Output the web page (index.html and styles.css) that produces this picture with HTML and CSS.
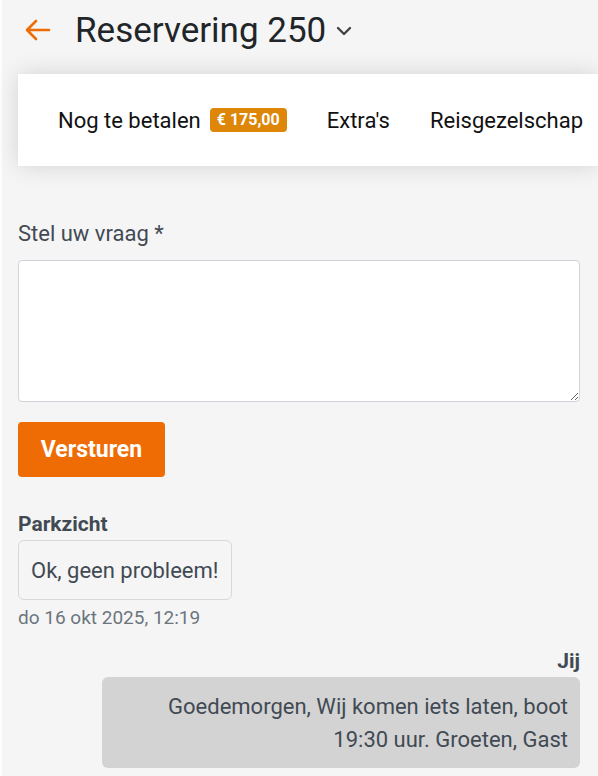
FILE: index.html
```html
<!DOCTYPE html>
<html lang="nl">
<head>
<meta charset="utf-8">
<link rel="stylesheet" href="styles.css">
</head>
<body>
<div class="page">
<header class="topbar">
  <svg class="back" width="28" height="24" viewBox="0 0 28 24"><path d="M26 12H4M13 3L4 12l9 9" fill="none" stroke="#ef6c05" stroke-width="2.6" stroke-linecap="round" stroke-linejoin="round"/></svg>
  <h1 class="title">Reservering 250</h1>
  <svg class="chev" width="16" height="10" viewBox="0 0 16 10"><path d="M2 2l6 6 6-6" fill="none" stroke="#444" stroke-width="2.4" stroke-linecap="round" stroke-linejoin="round"/></svg>
</header>
<nav class="tabs">
  <span class="tab">Nog te betalen <span class="badge">€ 175,00</span></span>
  <span class="tab">Extra's</span>
  <span class="tab">Reisgezelschap</span>
</nav>
<main class="content">
  <label class="label" for="q">Stel uw vraag *</label>
  <textarea id="q" class="input"></textarea>
  <button class="btn">Versturen</button>
  <div class="msg">
    <div class="sender">Parkzicht</div>
    <div class="bubble">Ok, geen probleem!</div>
    <div class="time">do 16 okt 2025, 12:19</div>
  </div>
  <div class="msg mine">
    <div class="sender">Jij</div>
    <div class="bubble own">Goedemorgen, Wij komen iets laten, boot<br>19:30 uur. Groeten, Gast</div>
  </div>
</main>
</div>
</body>
</html>
```
FILE: styles.css
```css
* { box-sizing: border-box; }
html { background: #fdfdfd; }
html, body { margin: 0; padding: 0; }
body {
  font-family: Roboto, "Liberation Sans", sans-serif;
  color: #212529;
  width: 598px;
  height: 776px;
  overflow: hidden;
}
.page {
  margin-left: 2px;
  height: 776px;
  background: #f5f5f5;
}
.topbar {
  height: 62px;
  display: flex;
  align-items: center;
  padding: 0 0 0 21px;
}
.back { margin-top: -2px; }
.title {
  margin: -2px 0 0 24px;
  font-size: 35px;
  font-weight: 400;
  color: #212529;
  line-height: 1;
}
.chev { margin-left: 10px; }
.tabs {
  margin: 12px 0 0 16px;
  height: 92px;
  background: #fff;
  display: flex;
  align-items: center;
  padding-left: 40px;
  gap: 40px;
  box-shadow: 0 0 22px rgba(0,0,0,0.14);
  white-space: nowrap;
}
.tab {
  font-size: 22px;
  color: #111;
  display: flex;
  align-items: center;
}
.badge {
  display: inline-block;
  margin-left: 9px;
  background: #de8608;
  color: #fff;
  font-size: 16px;
  font-weight: 700;
  padding: 3px 7px;
  border-radius: 4px;
  line-height: 18px;
}
.content {
  padding: 56px 16px 0 16px;
  display: flex;
  flex-direction: column;
}
.label {
  font-size: 22px;
  color: #414a53;
  line-height: 24px;
}
.input {
  margin-top: 14px;
  width: 562px;
  height: 142px;
  border: 1px solid #ced4da;
  border-radius: 4px;
  background: #fff;
  resize: vertical;
}
.btn {
  margin-top: 20px;
  align-self: flex-start;
  width: 147px;
  height: 55px;
  background: #ef6c05;
  color: #fff;
  border: none;
  border-radius: 4px;
  font-family: Roboto, "Liberation Sans", sans-serif;
  font-size: 23px;
  font-weight: 700;
  padding: 0;
}
.msg {
  margin-top: 35px;
  display: flex;
  flex-direction: column;
  align-items: flex-start;
}
.sender {
  font-size: 21px;
  font-weight: 700;
  color: #414a53;
  line-height: 24px;
}
.bubble {
  margin-top: 4px;
  border: 1px solid #d8d8d8;
  border-radius: 6px;
  padding: 0 12px;
  height: 60px;
  display: flex;
  align-items: center;
  font-size: 22px;
  color: #414a53;
}
.time {
  margin-top: 7px;
  font-size: 19px;
  color: #6c757d;
  line-height: 22px;
}
.mine {
  align-items: flex-end;
  margin-top: 20px;
  width: 562px;
}
.bubble.own {
  margin-top: 4px;
  width: 478px;
  height: 91px;
  border: none;
  background: #d3d3d3;
  display: block;
  text-align: right;
  padding: 13px 12px 0 0;
  line-height: 33px;
}
```
